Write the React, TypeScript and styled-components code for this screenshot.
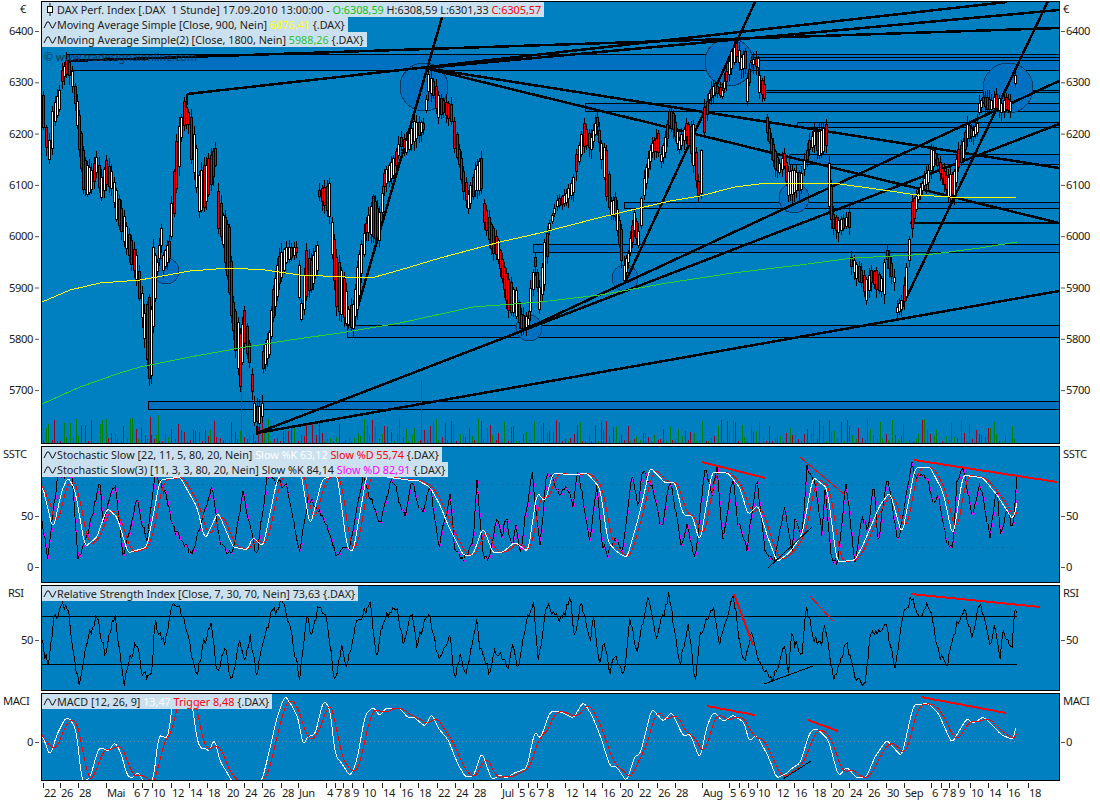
import React from 'react'
import styled, { createGlobalStyle } from 'styled-components'

type Pt = [number, number]
type Seg = [number, number, number, number]

const GlobalStyle = createGlobalStyle`
  html, body { margin: 0; padding: 0; background: #fff; }
  body { font-family: "Noto Sans", "Liberation Sans", sans-serif; }
`

const Page = styled.div`
  width: 1100px;
  height: 800px;
  padding-top: 1px;
  box-sizing: border-box;
  display: grid;
  grid-template-rows: 443px 137px 106px 88px 17px;
  row-gap: 2px;
  overflow: hidden;
`
const Row = styled.div`
  display: grid;
  grid-template-columns: 41px 1019px 40px;
`
const Plot = styled.div`
  position: relative;
  border: 1px solid #000;
  background: #0080c0;
  overflow: hidden;
`
const ChartSvg = styled.svg`
  display: block;
  width: 100%;
  height: 100%;
  shape-rendering: crispEdges;
`
const AxisSvg = styled.svg`
  display: block;
  width: 100%;
  height: 100%;
`
const AxisLabel = styled.text`
  font-size: 11.2px;
  letter-spacing: -0.4px;
  fill: #1a1a1a;
`
const Legend = styled.div`
  position: absolute;
  left: 0;
  top: 0;
`
const LegendRow = styled.div`
  display: flex;
  align-items: center;
  width: fit-content;
  height: 15px;
  padding: 0 3px 0 1px;
  background: #cbe1f0;
  color: #222;
  font-size: 10.8px;
  line-height: 15px;
  white-space: pre;
`
const LegendText = styled.span``
const Value = styled.span<{ $color: string }>`
  color: ${(p) => p.$color};
`
const Copyright = styled.div`
  position: absolute;
  left: 2px;
  top: 47px;
  font-size: 10.8px;
  color: #0c3358;
  white-space: pre;
`
const Glyph = styled.svg`
  flex: none;
  width: 14px;
  height: 13px;
`

const rng = (seed: number) => () => {
  seed = (seed * 1664525 + 1013904223) >>> 0
  return seed / 4294967296
}

// [x, top, bottom] of the candle ribbon, read off the picture
const priceKeys: [number, number, number][] = [
  [42, 95, 128], [45, 125, 150], [48, 140, 160], [51, 110, 150], [54, 102, 122], [58, 90, 110], [61, 70, 82], [65, 60, 75], [68, 62, 76],
  [71, 70, 88], [74, 85, 105], [78, 115, 150], [82, 150, 190], [86, 165, 195], [90, 170, 190], [95, 155, 175], [100, 175, 200], [105, 160, 185],
  [110, 170, 190], [115, 190, 220], [120, 205, 235], [125, 225, 250], [130, 240, 265], [135, 255, 280], [138, 270, 300], [143, 310, 342],
  [148, 296, 380], [150, 300, 385], [152, 247, 327], [156, 262, 272], [160, 227, 247], [162, 253, 273], [168, 240, 260], [170, 200, 240],
  [175, 137, 193], [180, 115, 140], [183, 100, 127], [187, 112, 125], [190, 117, 160], [195, 143, 193], [198, 170, 217], [205, 160, 207],
  [214, 147, 167], [217, 187, 233], [222, 213, 247], [228, 220, 300], [232, 300, 333], [239, 333, 387], [243, 307, 347], [248, 343, 363],
  [253, 403, 423], [258, 405, 425], [261, 403, 417], [262, 350, 370], [268, 330, 357], [272, 287, 320], [278, 253, 287], [285, 247, 263],
  [295, 247, 253], [298, 263, 300], [300, 303, 320], [305, 247, 300], [310, 260, 290], [316, 243, 273], [318, 190, 197], [328, 183, 217],
  [331, 220, 257], [335, 257, 307], [343, 273, 323], [347, 307, 327], [352, 303, 330], [358, 250, 300], [365, 223, 233], [372, 193, 240],
  [378, 210, 243], [383, 173, 187], [392, 157, 177], [400, 137, 147], [405, 140, 153], [413, 120, 143], [422, 123, 130], [427, 73, 93],
  [432, 80, 97], [437, 93, 120], [442, 100, 113], [450, 103, 123], [453, 117, 153], [458, 147, 167], [462, 170, 193], [467, 193, 210],
  [474, 167, 193], [480, 157, 190], [483, 203, 223], [490, 223, 250], [497, 240, 260], [503, 267, 290], [507, 277, 313], [515, 290, 317],
  [520, 313, 330], [527, 317, 327], [529, 287, 313], [534, 257, 267], [538, 287, 310], [543, 240, 287], [548, 223, 230], [556, 200, 207],
  [565, 193, 203], [572, 177, 193], [575, 153, 173], [583, 123, 147], [590, 137, 150], [596, 117, 127], [600, 143, 160], [605, 147, 200],
  [610, 200, 217], [614, 197, 217], [620, 227, 263], [623, 263, 283], [627, 253, 263], [633, 210, 233], [637, 230, 247], [640, 197, 227],
  [643, 177, 197], [647, 157, 170], [651, 143, 153], [657, 133, 153], [660, 153, 163], [664, 137, 153], [668, 110, 127], [672, 113, 130],
  [678, 140, 150], [685, 123, 137], [692, 123, 167], [697, 180, 197], [700, 147, 197], [703, 107, 133], [708, 93, 100], [714, 83, 93],
  [721, 90, 97], [725, 70, 83], [730, 50, 70], [735, 43, 57], [740, 57, 70], [744, 50, 70], [746, 77, 103], [750, 60, 63], [757, 58, 68],
  [758, 75, 93], [763, 83, 100], [766, 117, 133], [770, 137, 153], [774, 150, 170], [778, 163, 173], [783, 153, 167], [787, 170, 197],
  [793, 170, 193], [800, 173, 190], [803, 160, 170], [808, 140, 150], [813, 130, 147], [818, 130, 157], [822, 127, 153], [825, 123, 147],
  [828, 157, 213], [832, 213, 230], [837, 220, 233], [845, 217, 227], [848, 210, 230], [850, 257, 267], [855, 263, 280], [860, 270, 283],
  [865, 277, 303], [870, 270, 283], [875, 270, 290], [880, 277, 293], [883, 260, 297], [886, 250, 260], [890, 263, 277], [893, 277, 283],
  [896, 307, 313], [900, 300, 310], [905, 267, 297], [908, 237, 263], [911, 197, 233], [917, 193, 200], [923, 177, 187], [927, 170, 183],
  [930, 147, 173], [934, 153, 160], [941, 167, 180], [947, 177, 197], [953, 170, 197], [957, 147, 170], [962, 140, 160], [966, 123, 140],
  [972, 130, 137], [976, 123, 133], [978, 103, 113], [982, 97, 103], [986, 97, 110], [990, 100, 110], [995, 93, 110], [1000, 103, 113],
  [1005, 97, 110], [1011, 103, 113],
]

const candles = (() => {
  const r = rng(11)
  const out: { x: number; top: number; bottom: number; hi: number; lo: number; up: boolean }[] = []
  const push = (x: number, t: number, b: number, up: boolean) => {
    out.push({ x: Math.round(x), top: t, bottom: Math.max(b, t + 2), hi: t - 2 - r() * 7, lo: b + 2 + r() * 8, up })
  }
  for (let i = 0; i < priceKeys.length - 1; i++) {
    const [x0, t0, b0] = priceKeys[i]
    const [x1, t1, b1] = priceKeys[i + 1]
    const falling = t1 + b1 > t0 + b0
    const n = Math.max(1, Math.round((x1 - x0) / 2.4))
    for (let k = 0; k < n; k++) {
      const f = k / n
      const t = t0 + (t1 - t0) * f
      const b = b0 + (b1 - b0) * f
      const inset = (b - t) * 0.12 * r()
      push(x0 + (x1 - x0) * f, t + inset, b - inset, r() < (falling ? 0.2 : 0.8))
    }
  }
  push(1014, 75, 83, true)
  return out
})()

const volumes = (() => {
  const r = rng(29)
  const out: { x: number; h: number; color: string }[] = []
  for (let x = 42; x < 1017; x += 3) {
    const v = r()
    out.push({ x: x + Math.round(r()), h: 2 + v * v * 24, color: r() < 0.5 ? '#008000' : '#a00020' })
  }
  out.push({ x: 150, h: 26, color: '#a00020' }, { x: 158, h: 28, color: '#008000' }, { x: 241, h: 68, color: '#008000' }, { x: 421, h: 63, color: '#008000' })
  return out
})()

const yellowMa: Pt[] = [
  [42, 302], [70, 290], [100, 283], [140, 280], [190, 271], [230, 268], [265, 270], [300, 275], [345, 277], [375, 277], [400, 270], [440, 258],
  [500, 242], [540, 233], [598, 218], [640, 208], [670, 201], [700, 196], [735, 187], [767, 183], [833, 183], [883, 190], [917, 195], [967, 198], [1017, 197],
]
const greenMa: Pt[] = [
  [42, 404], [80, 387], [120, 373], [140, 367], [190, 357], [240, 348], [290, 340], [340, 333], [400, 323], [473, 307], [540, 302],
  [600, 295], [667, 283], [733, 273], [800, 265], [853, 258], [933, 254], [980, 248], [1017, 242],
]

const bands: [number, number, number][] = [
  [66, 54, 70], [752, 57, 60], [765, 90, 92], [585, 103, 111], [797, 122, 127], [789, 154, 164], [624, 202, 208], [533, 244, 252], [347, 325, 337], [148, 401, 409],
]
const circles: [number, number, number][] = [
  [424, 87, 24], [729, 62, 24], [1008, 88, 25], [166, 271, 13], [529, 328, 13], [625, 278, 13], [794, 198, 15],
]
const trendLines: Seg[] = [
  [187, 94, 1007, 2], [425, 68, 1059, 10], [66, 61, 1059, 28], [425, 68, 1059, 168], [425, 68, 1059, 223], [517, 333, 1059, 81], [257, 433, 1059, 124],
  [257, 433, 1059, 291], [352, 327, 447, 0], [625, 283, 755, 2], [900, 311, 1048, 1], [910, 223, 1059, 223], [187, 94, 187, 105], [257, 426, 257, 435],
]

const stochFast: Pt[] = [
  [42, 523], [48, 557], [53, 513], [58, 477], [72, 473], [78, 558], [87, 537], [100, 480], [103, 523], [115, 483], [123, 558], [137, 500], [147, 543], [155, 473],
  [167, 497], [173, 527], [192, 555], [212, 487], [220, 543], [232, 557], [243, 493], [257, 557], [267, 477], [287, 487], [300, 553], [308, 497], [325, 520],
  [335, 553], [350, 547], [363, 477], [380, 523], [392, 477], [405, 518], [412, 478], [417, 502], [423, 515], [430, 485], [439, 547], [450, 495], [455, 552],
  [463, 558], [473, 545], [477, 478], [483, 555], [490, 558], [497, 515], [502, 538], [506, 517], [512, 548], [516, 522], [520, 555], [532, 470], [540, 545],
  [547, 472], [553, 478], [560, 495], [565, 485], [573, 505], [578, 470], [590, 542], [597, 482], [602, 545], [608, 553], [617, 538], [622, 555], [632, 475],
  [638, 508], [643, 468], [653, 488], [662, 530], [670, 478], [682, 548], [687, 525], [695, 560], [705, 468], [712, 495], [717, 467], [723, 542], [733, 475],
  [738, 522], [747, 547], [757, 478], [765, 548], [773, 562], [785, 508], [792, 552], [795, 518], [802, 535], [807, 468], [813, 478], [817, 495], [822, 535],
  [825, 488], [832, 562], [838, 562], [846, 482], [855, 562], [862, 515], [868, 532], [874, 483], [878, 545], [887, 475], [898, 543], [912, 465], [918, 478],
  [927, 475], [933, 502], [938, 495], [947, 543], [953, 547], [957, 478], [963, 470], [973, 517], [980, 482], [990, 535], [997, 488], [1001, 538], [1007, 508],
  [1013, 530], [1017, 477],
]
const stochSlow: Pt[] = [
  [42, 484], [47, 505], [53, 530], [62, 490], [68, 477], [75, 490], [85, 547], [97, 537], [107, 508], [117, 517], [128, 553], [147, 547], [160, 480], [180, 477],
  [197, 507], [205, 540], [218, 512], [233, 547], [247, 550], [253, 537], [263, 547], [277, 480], [287, 467], [300, 467], [310, 527], [322, 480], [337, 473],
  [347, 547], [353, 553], [367, 473], [387, 477], [407, 480], [417, 480], [430, 487], [440, 505], [448, 525], [463, 555], [473, 555], [483, 527], [493, 553],
  [503, 552], [515, 542], [528, 552], [537, 492], [545, 502], [553, 473], [573, 475], [587, 473], [600, 488], [608, 542], [617, 552], [627, 558], [640, 512],
  [650, 467], [665, 483], [675, 482], [683, 515], [692, 515], [700, 543], [712, 472], [728, 473], [740, 488], [748, 515], [758, 505], [767, 535], [777, 562],
  [790, 552], [802, 535], [813, 477], [827, 488], [837, 562], [855, 560], [863, 545], [880, 505], [890, 492], [902, 535], [915, 468], [930, 467], [943, 492],
  [953, 538], [963, 475], [983, 478], [997, 495], [1013, 520], [1019, 495],
]

// coordinates taken from 3x crops: origin plus flat list of crop x,y
const crop = (ox: number, oy: number, list: number[]): Pt[] => {
  const out: Pt[] = []
  for (let i = 0; i < list.length; i += 2) out.push([ox + list[i] / 3, oy + list[i + 1] / 3])
  return out
}

const rsi: Pt[] = [
  ...crop(40, 585, [5, 170, 25, 250, 40, 110, 65, 60, 85, 80, 100, 200, 118, 310, 135, 190, 170, 90, 195, 210, 225, 80, 252, 310, 265, 230, 290, 170, 308, 270, 335, 270, 345, 110, 375, 180, 400, 50, 430, 90, 445, 160, 470, 280, 490, 180, 515, 110, 530, 270, 555, 190, 575, 290, 600, 160, 615, 240, 630, 155, 650, 270, 690, 90, 730, 50, 750, 130, 780, 280, 800, 90, 815, 160, 835, 60, 860, 110, 885, 290, 905, 190, 920, 250, 950, 110, 990, 60, 1012, 220]),
  ...crop(380, 585, [0, 140, 20, 90, 50, 70, 70, 170, 95, 85, 110, 180, 145, 80, 175, 220, 210, 160, 225, 280, 240, 210, 255, 270, 290, 115, 300, 190, 330, 270, 345, 190, 385, 250, 400, 170, 415, 260, 425, 190, 445, 90, 460, 50, 475, 230, 500, 60, 545, 110, 572, 30, 580, 160, 605, 50, 630, 180, 640, 100, 660, 240, 670, 150, 690, 270, 705, 205, 730, 280, 750, 100, 770, 195, 805, 35, 830, 160, 867, 30, 900, 240, 925, 110, 945, 290]),
  ...crop(700, 580, [0, 170, 40, 80, 60, 190, 100, 50, 130, 250, 155, 160, 175, 240, 220, 300, 255, 200, 265, 280, 275, 170, 305, 230, 320, 80, 340, 170, 365, 190, 375, 125, 400, 300, 440, 190, 465, 290, 495, 315, 510, 170, 560, 130, 585, 275, 605, 120, 635, 50, 660, 110, 685, 70, 720, 230, 740, 260, 770, 130, 795, 90, 815, 170, 840, 65, 870, 190, 885, 130, 900, 240, 910, 140, 935, 220, 945, 80, 952, 95]),
]
const macd: Pt[] = [
  ...crop(40, 585, [5, 445, 30, 515, 50, 450, 75, 400, 90, 400, 110, 440, 125, 590, 150, 580, 175, 490, 190, 490, 205, 500, 225, 470, 245, 510, 260, 570, 275, 580, 295, 560, 310, 590, 340, 590, 355, 450, 385, 460, 400, 330, 415, 310, 450, 310, 470, 460, 480, 490, 495, 490, 510, 500, 522, 455, 540, 530, 560, 560, 575, 590, 630, 590, 665, 590, 690, 490, 710, 400, 735, 330, 760, 370, 775, 400, 790, 490, 800, 455, 825, 450, 850, 345, 870, 370, 885, 510, 905, 535, 930, 575, 950, 530, 975, 390, 1000, 365]),
  ...crop(380, 585, [0, 395, 15, 370, 60, 370, 85, 400, 100, 395, 135, 425, 155, 385, 175, 430, 205, 465, 230, 530, 255, 575, 280, 575, 305, 500, 335, 585, 360, 570, 380, 580, 400, 565, 440, 550, 465, 435, 480, 465, 510, 380, 540, 380, 580, 400, 610, 350, 635, 390, 660, 450, 690, 545, 710, 545, 740, 590, 765, 510, 780, 510, 815, 370, 850, 410, 875, 380, 910, 455, 930, 445]),
  ...crop(700, 580, [0, 540, 20, 440, 40, 395, 70, 425, 100, 405, 135, 430, 145, 485, 170, 465, 205, 530, 230, 595, 260, 580, 275, 565, 300, 550, 330, 455, 350, 445, 385, 480, 415, 590, 440, 560, 470, 595, 500, 590, 525, 530, 560, 480, 605, 530, 640, 375, 685, 370, 715, 400, 755, 490, 800, 415, 820, 430, 850, 410, 880, 440, 905, 465, 940, 480, 948, 440, 954, 410]),
]

const sampleAt = (pts: Pt[], x: number) => {
  let i = 0
  while (i < pts.length - 2 && pts[i + 1][0] < x) i++
  const [x0, y0] = pts[i]
  const [x1, y1] = pts[i + 1]
  return y0 + ((y1 - y0) * (x - x0)) / Math.max(1, x1 - x0)
}
const resample = (pts: Pt[], step: number, noise: number, seed: number): Pt[] => {
  const r = rng(seed)
  const out: Pt[] = []
  for (let x = pts[0][0]; x <= pts[pts.length - 1][0]; x += step) out.push([x, sampleAt(pts, x) + (r() - 0.5) * noise])
  return out
}
// trailing mean over a 1px resample, shift is how far the result is moved back toward the source
const lagged = (pts: Pt[], win: number, shift = 0): Pt[] => {
  const a = resample(pts, 1, 0, 1)
  return a.map(([x], i) => {
    const from = Math.max(0, i - win)
    let s = 0
    for (let k = from; k <= i; k++) s += a[k][1]
    return [x - shift, s / (i - from + 1)] as Pt
  })
}
const toPoints = (pts: Pt[]) => pts.map(([x, y]) => `${x.toFixed(1)},${y.toFixed(1)}`).join(' ')

const Line = ({ pts, color, width = 1, dash }: { pts: Pt[]; color: string; width?: number; dash?: string }) => (
  <polyline points={toPoints(pts)} fill="none" stroke={color} strokeWidth={width} strokeDasharray={dash} />
)
const Segments = ({ segs, color, width = 1 }: { segs: Seg[]; color: string; width?: number }) => (
  <>
    {segs.map(([a, b, c, d], i) => (
      <line key={i} x1={a} y1={b} x2={c} y2={d} stroke={color} strokeWidth={width} />
    ))}
  </>
)

const WaveIcon = () => (
  <Glyph viewBox="0 0 14 13">
    <path d="M1 10 L4 4 L6 4 L9 10 L10 10 L13 4" fill="none" stroke="#111" strokeWidth="1" />
  </Glyph>
)
const CandleIcon = () => (
  <Glyph viewBox="0 0 14 13">
    <path d="M7 0 V3 M7 10 V13" stroke="#111" strokeWidth="1" />
    <rect x="4.5" y="3.5" width="5" height="6" fill="#fff" stroke="#111" strokeWidth="1" />
  </Glyph>
)

const priceTicks = [6400, 6300, 6200, 6100, 6000, 5900, 5800, 5700]
const dateTicks: [number, string][] = [
  [43, '22'], [60, '26'], [78, '28'], [106, 'Mai'], [133, '6'], [142, '7'], [152, '10'], [171, '12'], [189, '14'], [207, '18'], [226, '20'], [244, '24'], [262, '26'],
  [281, '28'], [298, 'Jun'], [326, '4'], [335, '7'], [343, '8'], [352, '9'], [363, '10'], [382, '14'], [400, '16'], [418, '18'], [437, '22'], [455, '24'], [473, '28'],
  [501, 'Jul'], [518, '5'], [528, '6'], [537, '7'], [547, '8'], [565, '12'], [583, '14'], [602, '16'], [620, '20'], [638, '22'], [657, '26'], [675, '28'], [702, 'Aug'],
  [729, '5'], [739, '6'], [748, '9'], [757, '10'], [776, '12'], [794, '16'], [813, '18'], [831, '20'], [849, '24'], [867, '26'], [886, '30'], [904, 'Sep'], [931, '6'],
  [941, '7'], [949, '8'], [958, '9'], [970, '10'], [988, '14'], [1007, '16'], [1028, '18'],
]

// axis columns keep page y coordinates through the viewBox of their row
const LeftAxis = ({ top, height, title, ticks }: { top: number; height: number; title: string; ticks: [number, string][] }) => (
  <AxisSvg viewBox={`0 ${top} 41 ${height}`}>
    <AxisLabel x={title === '€' ? 20 : title === 'RSI' ? 8 : 3} y={top + 12}>{title}</AxisLabel>
    {ticks.map(([y, label]) => (
      <g key={label}>
        <AxisLabel x={33} y={y + 4} textAnchor="end">{label}</AxisLabel>
        <line x1={35} y1={y + 0.5} x2={39} y2={y + 0.5} stroke="#555" />
      </g>
    ))}
  </AxisSvg>
)
const RightAxis = ({ top, height, title, ticks }: { top: number; height: number; title: string; ticks: [number, string][] }) => (
  <AxisSvg viewBox={`1060 ${top} 40 ${height}`}>
    <AxisLabel x={1063} y={top + 12}>{title}</AxisLabel>
    {ticks.map(([y, label]) => (
      <g key={label}>
        <line x1={1061} y1={y + 0.5} x2={1065} y2={y + 0.5} stroke="#555" />
        <AxisLabel x={1066} y={y + 4}>{label}</AxisLabel>
      </g>
    ))}
  </AxisSvg>
)

const PriceChart = () => (
  <ChartSvg viewBox="42 2 1017 441">
    {bands.map(([x, y0, y1]) => (
      <rect key={x} x={x + 0.5} y={y0 + 0.5} width={1060 - x} height={y1 - y0} fill="#0070c0" stroke="#000" />
    ))}
    {circles.map(([x, y, r]) => (
      <circle key={x} cx={x} cy={y} r={r} fill="#0070c0" stroke="#0a3a66" />
    ))}
    {volumes.map((v, i) => (
      <line key={i} x1={v.x + 0.5} x2={v.x + 0.5} y1={443} y2={443 - v.h} stroke={v.color} />
    ))}
    <Segments segs={trendLines} color="#000" width={2.5} />
    {candles.map((c, i) => (
      <g key={i}>
        <line x1={c.x + 1.5} x2={c.x + 1.5} y1={c.hi} y2={c.lo} stroke="#000" />
        <rect x={c.x + 0.5} y={c.top} width={2} height={c.bottom - c.top} fill={c.up ? '#fff' : '#f00000'} stroke="#000" />
      </g>
    ))}
    <Line pts={yellowMa} color="#ffff00" />
    <Line pts={greenMa} color="#30d030" />
  </ChartSvg>
)

const StochChart = () => {
  const fast = resample(stochFast, 1.5, 7, 5)
  return (
    <ChartSvg viewBox="42 447 1017 135">
      <line x1={42} x2={1017} y1={484.5} y2={484.5} stroke="#1d5c8a" strokeDasharray="1 4" />
      <line x1={42} x2={1017} y1={547.5} y2={547.5} stroke="#1d5c8a" strokeDasharray="1 4" />
      <Line pts={fast} color="#000" />
      <Line pts={fast.map(([x, y]) => [x + 1, y + 1] as Pt)} color="#ff00ff" dash="4 7" />
      <Line pts={lagged(stochSlow, 9, 1)} color="#ff0000" />
      <Line pts={lagged(stochSlow, 4, 2)} color="#ffffff" />
      <Segments segs={[[702, 462, 765, 478], [914, 460, 1057, 482]]} color="#ff0000" width={2} />
      <Segments segs={[[800, 457, 845, 495]]} color="#ff0000" />
      <Segments segs={[[768, 568, 812, 527]]} color="#000" />
    </ChartSvg>
  )
}

const RsiChart = () => (
  <ChartSvg viewBox="42 586 1017 104">
    <line x1={42} x2={1017} y1={616.5} y2={616.5} stroke="#000" />
    <line x1={42} x2={1017} y1={664.5} y2={664.5} stroke="#000" />
    <Line pts={resample(rsi, 1.5, 9, 9)} color="#000" />
    <Segments segs={[[734, 594, 753, 645], [911, 594, 1040, 607]]} color="#ff0000" width={2} />
    <Segments segs={[[809, 595, 833, 621]]} color="#ff0000" />
    <Segments segs={[[764, 684, 813, 666]]} color="#000" />
  </ChartSvg>
)

const MacdChart = () => (
  <ChartSvg viewBox="42 694 1017 86">
    <line x1={42} x2={1017} y1={741.5} y2={741.5} stroke="#6b94ad" strokeDasharray="1 3" />
    <Line pts={lagged(macd, 4, 2)} color="#ffffff" />
    <Line pts={lagged(macd, 11, 1)} color="#ff0000" />
    <Segments segs={[[707, 706, 755, 715], [808, 720, 838, 731], [921, 697, 1006, 713]]} color="#ff0000" width={2} />
    <Segments segs={[[783, 779, 811, 761]]} color="#000" />
  </ChartSvg>
)

const priceAxis = priceTicks.map((p, i) => [31 + i * 51.3, String(p)] as [number, string])

export default function App() {
  return (
    <Page>
      <GlobalStyle />
      <Row>
        <LeftAxis top={1} height={443} title="€" ticks={priceAxis} />
        <Plot>
          <PriceChart />
          <Copyright>© www.tradesignalonline.com</Copyright>
          <Legend>
            <LegendRow>
              <CandleIcon />
              <LegendText>
                {'DAX Perf. Index [.DAX  1 Stunde] 17.09.2010 13:00:00 - '}
                <Value $color="#10c010">O:6308,59</Value> H:6308,59 L:6301,33 <Value $color="#ff0000">C:6305,57</Value>
              </LegendText>
            </LegendRow>
            <LegendRow>
              <WaveIcon />
              <LegendText>
                {'Moving Average Simple [Close, 900, Nein] '}
                <Value $color="#ffff00">6076,41</Value> {'{.DAX}'}
              </LegendText>
            </LegendRow>
            <LegendRow>
              <WaveIcon />
              <LegendText>
                {'Moving Average Simple(2) [Close, 1800, Nein] '}
                <Value $color="#30c030">5988,26</Value> {'{.DAX}'}
              </LegendText>
            </LegendRow>
          </Legend>
        </Plot>
        <RightAxis top={1} height={443} title="€" ticks={priceAxis} />
      </Row>
      <Row>
        <LeftAxis top={446} height={137} title="SSTC" ticks={[[516, '50'], [567, '0']]} />
        <Plot>
          <StochChart />
          <Legend>
            <LegendRow>
              <WaveIcon />
              <LegendText>
                {'Stochastic Slow [22, 11, 5, 80, 20, Nein] '}
                <Value $color="#ffffff">Slow %K 63,12</Value> <Value $color="#ff0000">Slow %D 55,74</Value> {'{.DAX}'}
              </LegendText>
            </LegendRow>
            <LegendRow>
              <WaveIcon />
              <LegendText>
                {'Stochastic Slow(3) [11, 3, 3, 80, 20, Nein] Slow %K 84,14 '}
                <Value $color="#ff00ff">Slow %D 82,91</Value> {'{.DAX}'}
              </LegendText>
            </LegendRow>
          </Legend>
        </Plot>
        <RightAxis top={446} height={137} title="SSTC" ticks={[[516, '50'], [567, '0']]} />
      </Row>
      <Row>
        <LeftAxis top={585} height={106} title="RSI" ticks={[[640, '50']]} />
        <Plot>
          <RsiChart />
          <Legend>
            <LegendRow>
              <WaveIcon />
              <LegendText>{'Relative Strength Index [Close, 7, 30, 70, Nein] 73,63 {.DAX}'}</LegendText>
            </LegendRow>
          </Legend>
        </Plot>
        <RightAxis top={585} height={106} title="RSI" ticks={[[640, '50']]} />
      </Row>
      <Row>
        <LeftAxis top={693} height={88} title="MACI" ticks={[[742, '0']]} />
        <Plot>
          <MacdChart />
          <Legend>
            <LegendRow>
              <WaveIcon />
              <LegendText>
                {'MACD [12, 26, 9] '}
                <Value $color="#ffffff">13,47</Value> <Value $color="#ff0000">Trigger 8,48</Value> {'{.DAX}'}
              </LegendText>
            </LegendRow>
          </Legend>
        </Plot>
        <RightAxis top={693} height={88} title="MACI" ticks={[[742, '0']]} />
      </Row>
      <AxisSvg viewBox="0 783 1100 17">
        {dateTicks.map(([x, label]) => (
          <g key={x}>
            <line x1={x + 0.5} x2={x + 0.5} y1={783} y2={788} stroke="#222" />
            <AxisLabel x={x + 1} y={797}>{label}</AxisLabel>
          </g>
        ))}
      </AxisSvg>
    </Page>
  )
}
